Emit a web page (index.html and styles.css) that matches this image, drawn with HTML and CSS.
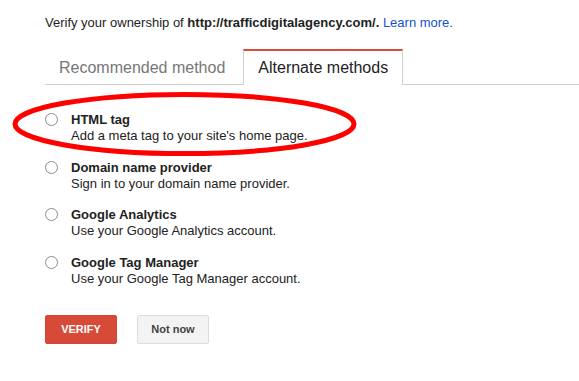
FILE: index.html
```html
<!DOCTYPE html>
<html lang="en">
<head>
  <meta charset="UTF-8">
  <meta name="viewport" content="width=device-width, initial-scale=1.0">
  <link rel="stylesheet" href="styles.css">
  <title>Verify ownership</title>
</head>
<body>
  <p class="intro">Verify your ownership of <b>http://trafficdigitalagency.com/.</b> <a href="#" class="learn_more">Learn more.</a></p>

  <div class="tabs">
    <div class="tab">Recommended method</div>
    <div class="tab tab_active">Alternate methods</div>
  </div>

  <div class="methods">
    <div class="method">
      <span class="radio"></span>
      <div class="method_text">
        <p class="method_title">HTML tag</p>
        <p class="method_description">Add a meta tag to your site's home page.</p>
      </div>
    </div>
    <div class="method">
      <span class="radio"></span>
      <div class="method_text">
        <p class="method_title">Domain name provider</p>
        <p class="method_description">Sign in to your domain name provider.</p>
      </div>
    </div>
    <div class="method">
      <span class="radio"></span>
      <div class="method_text">
        <p class="method_title">Google Analytics</p>
        <p class="method_description">Use your Google Analytics account.</p>
      </div>
    </div>
    <div class="method">
      <span class="radio"></span>
      <div class="method_text">
        <p class="method_title">Google Tag Manager</p>
        <p class="method_description">Use your Google Tag Manager account.</p>
      </div>
    </div>
  </div>

  <div class="actions">
    <button class="verify">VERIFY</button>
    <button class="not_now">Not now</button>
  </div>

  <!-- hand drawn highlight round the first option -->
  <svg class="highlight" width="579" height="381" viewBox="0 0 579 381">
    <ellipse cx="184.5" cy="124" rx="169.5" ry="29.6" fill="none" stroke="#ff0000" stroke-width="5"/>
  </svg>
</body>
</html>
```

FILE: styles.css
```css
/* Basics */
body {
  position: relative;
  margin: 0;
  padding: 15px 0 0 45px;
  width: 534px;
  height: 366px;
  overflow: hidden;
  font-family: Arial, "Liberation Sans", sans-serif;
  font-size: 13px;
  color: #222222;
  background-color: #ffffff;
}

p {
  margin: 0;
}

button {
  font-family: inherit;
  cursor: pointer;
}

/* Intro line */
.intro {
  line-height: 16px;
}

.learn_more {
  color: #1155cc;
  text-decoration: none;
}

/* Tabs */
.tabs {
  display: flex;
  margin-top: 18px;
  border-bottom: 1px solid #d0d0d0;
  font-size: 16px;
}

.tab {
  padding: 2px 18px 0 14px;
  line-height: 33px;
  color: #777777;
}

.tab_active {
  padding: 0 14px;
  margin-bottom: -1px;
  border: 1px solid #d0d0d0;
  border-top: 2px solid #dd4b39;
  border-bottom: none;
  line-height: 34px;
  color: #222222;
  background-color: #ffffff;
}

/* Method list */
.methods {
  display: flex;
  flex-direction: column;
  gap: 15.5px;
  margin-top: 27px;
}

.method {
  display: flex;
  gap: 13px;
}

.radio {
  width: 11px;
  height: 11px;
  margin-top: 1px;
  border: 1px solid #8a8a8a;
  border-radius: 50%;
  background-color: #ffffff;
}

.method_title {
  font-weight: bold;
  line-height: 16px;
}

.method_description {
  line-height: 16px;
}

/* Buttons */
.actions {
  display: flex;
  gap: 20px;
  margin-top: 28px;
}

.verify, .not_now {
  width: 72px;
  height: 29px;
  border-radius: 2px;
  font-size: 11px;
  font-weight: bold;
}

.verify {
  border: 1px solid #d14836;
  background-color: #d84a38;
  color: #ffffff;
}

.not_now {
  border: 1px solid #dcdcdc;
  background-color: #f3f3f3;
  color: #444444;
}

/* Highlight drawn over the page */
.highlight {
  position: absolute;
  left: 0;
  top: 0;
  pointer-events: none;
}
```
